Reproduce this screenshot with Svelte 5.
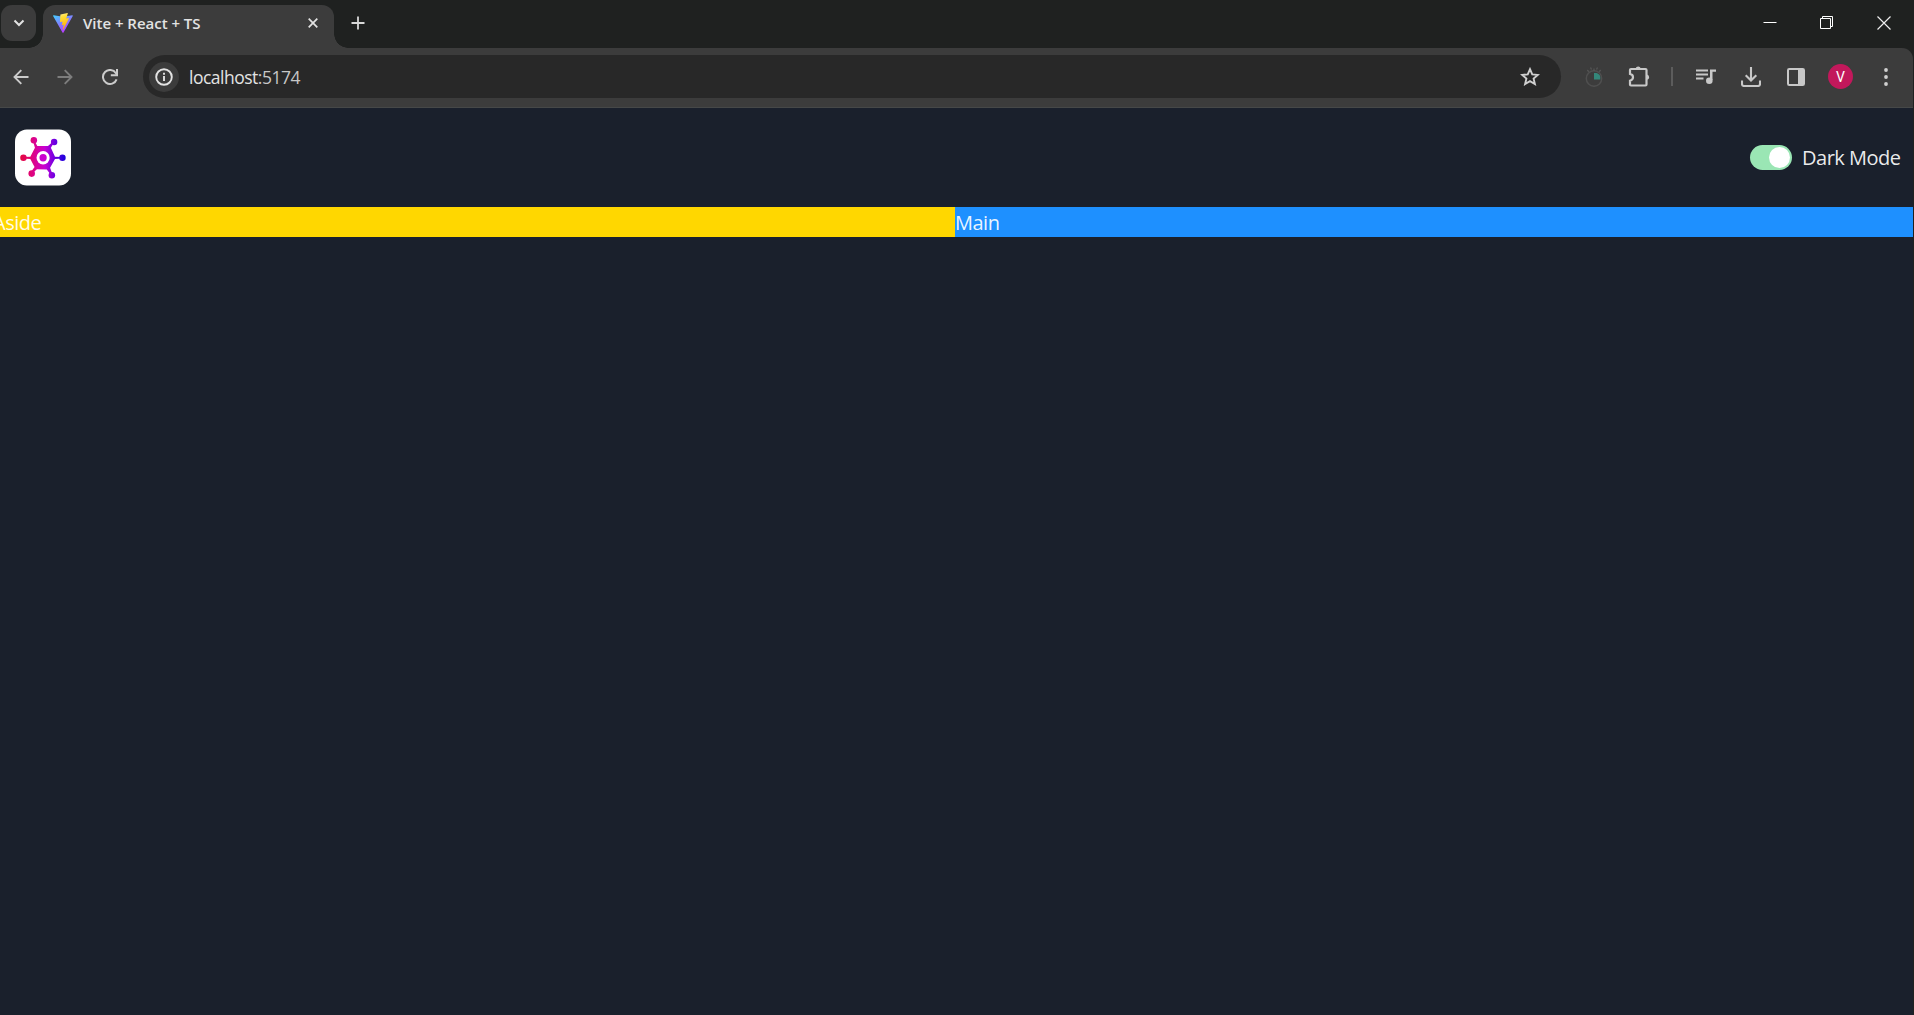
<script lang="ts">
  let dark = $state(true);
</script>

<div class="window">
  <div class="tabstrip">
    <button class="tab-search" aria-label="Search tabs">
      <svg width="12" height="8" viewBox="0 0 12 8"><path d="M1.500 1.500 6 6l4.500-4.500" fill="none" stroke="#e3e3e3" stroke-width="2" /></svg>
    </button>
    <div class="tab">
      <svg class="favicon" width="20" height="20" viewBox="0 0 20 20">
        <defs>
          <linearGradient id="vite" x1="0" y1="0" x2="0.6" y2="1"><stop offset="0" stop-color="#41d1ff" /><stop offset="1" stop-color="#bd34fe" /></linearGradient>
          <linearGradient id="bolt" x1="0.4" y1="0" x2="0.6" y2="1"><stop offset="0" stop-color="#ffea83" /><stop offset="0.2" stop-color="#ffdd35" /><stop offset="1" stop-color="#ffa800" /></linearGradient>
        </defs>
        <path d="M19.800 3 10.500 19.500a.6.6 0 0 1-1 0L.1 3a.6.6 0 0 1 .6-.8L10 3.800l9.200-1.600a.6.6 0 0 1 .6.8z" fill="url(#vite)" />
        <path d="M14.500.1 7.600 1.400a.3.3 0 0 0-.2.200L7 8.800c0 .2.1.300.3.300l1.900-.4c.2 0 .4.100.3.300L8.900 11.800c0 .2.1.400.3.300l1.200-.4c.2 0 .4.100.3.300l-.9 4.400c-.1.300.3.400.5.200l5.600-11.100c.1-.2-.1-.4-.3-.4l-2 .4c-.2 0-.3-.1-.3-.3l1.500-4.800c0-.2-.1-.4-.3-.3z" fill="url(#bolt)" />
      </svg>
      <span class="title">Vite + React + TS</span>
      <svg class="tab-close" width="10" height="10" viewBox="0 0 10 10"><path d="m.7.700 8.600 8.600M9.300.700.7 9.300" stroke="#e3e3e3" stroke-width="1.700" /></svg>
    </div>
    <svg class="new-tab" width="14" height="14" viewBox="0 0 14 14"><path d="M7 .5v13M.5 7h13" stroke="#d8d8d8" stroke-width="1.800" /></svg>
    <div class="controls">
      <span><svg width="14" height="14" viewBox="0 0 14 14"><path d="M.5 6.500h13" stroke="#fff" /></svg></span>
      <span><svg width="14" height="14" viewBox="0 0 14 14"><path d="M.5 2.500h10v10H.5zM2.500 2V.5h10v10H11" fill="none" stroke="#fff" /></svg></span>
      <span><svg width="14" height="14" viewBox="0 0 14 14"><path d="m.5.500 13 13M13.500.5l-13 13" stroke="#eee" stroke-width="1.200" /></svg></span>
    </div>
  </div>

  <div class="toolbar">
    <div class="nav">
      <span><svg width="16" height="16" viewBox="0 0 16 16"><path d="M15.500 8H2M8.300 1.200 1.500 8l6.800 6.800" fill="none" stroke="#cbcbcb" stroke-width="1.900" /></svg></span>
      <span><svg width="16" height="16" viewBox="0 0 16 16"><path d="M.5 8H14M7.700 1.200 14.500 8l-6.800 6.800" fill="none" stroke="#7d7d7d" stroke-width="1.900" /></svg></span>
      <span><svg width="16" height="16" viewBox="0 0 16 16"><path d="M14.600 10.300A7 7 0 1 1 13.900 4.200L15 5.800" fill="none" stroke="#cbcbcb" stroke-width="2" /><path d="M15 0v6.300H8.800" fill="none" stroke="#cbcbcb" stroke-width="2" /></svg></span>
    </div>
    <div class="omnibox">
      <span class="info">
        <svg width="18" height="18" viewBox="0 0 18 18"><circle cx="9" cy="9" r="7.800" fill="none" stroke="#e3e3e3" stroke-width="1.900" /><path d="M9 8v5M9 4.800v1.900" stroke="#e3e3e3" stroke-width="1.900" /></svg>
      </span>
      <span class="url">localhost<i>:5174</i></span>
      <svg class="star" width="20" height="20" viewBox="0 0 20 20"><path d="m10 2.200 2.250 5.200 5.600.500-4.250 3.700 1.300 5.500L10 14.200l-4.900 2.900 1.300-5.500L2.150 7.900l5.600-.5z" fill="none" stroke="#d0d0d0" stroke-width="1.900" /></svg>
    </div>
    <div class="actions">
      <span><svg width="18" height="22" viewBox="0 0 18 22"><circle cx="9" cy="12.500" r="7.700" fill="none" stroke="#4f4f4f" stroke-width="1.500" /><path d="M9 2.500V5M5.500 1.500l1 2M12.500 1.500l-1 2M2.300 4l1.500 1.700M15.700 4l-1.500 1.700" stroke="#555" stroke-width="1.300" /><path d="M9 7h2.500Q15.200 8.500 15.300 11v2.500H9z" fill="#34877a" /></svg></span>
      <span><svg width="22" height="22" viewBox="0 0 22 22"><path d="M3 3h14.500a1 1 0 0 1 1 1v14.500a1 1 0 0 1-1 1H3a1 1 0 0 1-1-1v-3.800c2-.5 3-1.700 3-3.400S4 8.400 2 7.900V4a1 1 0 0 1 1-1z" fill="none" stroke="#c8c8c8" stroke-width="2.200" /><path d="M7.600 2.500a2.700 2.700 0 0 1 5.200 0zM19 8.500a2.700 2.700 0 0 1 0 5.300z" fill="#c8c8c8" /></svg></span>
      <span class="divider"></span>
      <span><svg width="20" height="20" viewBox="0 0 20 20"><path d="M0 3.500h12M0 7.500h12M0 11.500h7.500" stroke="#c8c8c8" stroke-width="1.900" /><path d="M14 2.500h6v2.200h-3.500V13H14z" fill="#c8c8c8" /><circle cx="13.300" cy="13.700" r="3.300" fill="#c8c8c8" /></svg></span>
      <span><svg width="20" height="20" viewBox="0 0 20 20"><path d="M10 0v13M4.700 8.200 10 13.500l5.300-5.300M1 13.500V17a2 2 0 0 0 2 2h14a2 2 0 0 0 2-2v-3.500" fill="none" stroke="#c8c8c8" stroke-width="2.100" /></svg></span>
      <span><svg width="18" height="18" viewBox="0 0 18 18"><rect x="1" y="1" width="16" height="16" rx="1.300" fill="none" stroke="#c8c8c8" stroke-width="2" /><path d="M11 1h6v16h-6z" fill="#c8c8c8" /></svg></span>
      <span><b class="avatar">V</b></span>
      <span><svg width="4" height="18" viewBox="0 0 4 18"><circle cx="2" cy="2" r="1.900" fill="#d0d0d0" /><circle cx="2" cy="9" r="1.900" fill="#d0d0d0" /><circle cx="2" cy="16" r="1.900" fill="#d0d0d0" /></svg></span>
    </div>
  </div>

  <div class="page">
    <header>
      <svg width="56" height="57" viewBox="0 0 57 57" preserveAspectRatio="none">
        <defs><linearGradient id="hub" gradientUnits="userSpaceOnUse" x1="5" y1="0" x2="51" y2="0"><stop offset="0" stop-color="#e3073d" /><stop offset=".25" stop-color="#e00479" /><stop offset=".55" stop-color="#c800d2" /><stop offset=".75" stop-color="#7400e0" /><stop offset="1" stop-color="#1b00dc" /></linearGradient></defs>
        <rect x="0" y=".5" width="57" height="56" rx="12" fill="#fff" />
        <g fill="url(#hub)">
          <circle cx="19.200" cy="11.300" r="3.300" /><circle cx="39.800" cy="13" r="3.300" /><circle cx="8.600" cy="28.800" r="3.300" /><circle cx="48.300" cy="28.800" r="3.300" /><circle cx="17" cy="44.600" r="3.300" /><circle cx="37.500" cy="46.200" r="3.300" />
          <path d="m18.700 13.500 1.700-.7L22.700 17h10.900l4.200-3.700 1.500 1-2.800 4.500 4.200 8.900 7.300.4v1.400l-7.300.4-5 8.800 2.500 6.500-1.700.7-4.100-5.300-10.100-.3-4.500 4-1.500-1.200 3.600-5-4.300-8.200-8.400-.4v-1.400l8.400-.4 4.700-8.900z" />
        </g>
        <circle cx="28.600" cy="28.700" r="6.700" fill="#fff" /><circle cx="28.600" cy="28.700" r="3.700" fill="#cb00cf" />
      </svg>
      <label>
        <input type="checkbox" bind:checked={dark} />
        <span class="track"></span>
        <span class="label">Dark Mode</span>
      </label>
    </header>
    <div class="columns">
      <aside><span>Aside</span></aside>
      <main><span>Main</span></main>
    </div>
  </div>
</div>

<style>
  :global(body) { background: #000; overflow: hidden; }
  * { box-sizing: border-box; }
  svg { display: block; flex: none; }
  .window { height: 1015px; display: flex; flex-direction: column; background: #1f2120; font-family: "Open Sans", "Noto Sans", sans-serif; }
  .tabstrip { height: 48px; display: flex; align-items: flex-start; padding: 5px 2px 0 1px; }
  .tab-search { width: 35px; height: 36px; border: 0; padding: 0; border-radius: 11px; background: #3c3c3c; display: grid; place-items: center; }
  .tab { position: relative; width: 291px; height: 43px; margin-left: 7px; padding: 0 16px 7px 10px; display: flex; align-items: center; background: #3c3c3c; border-radius: 12px 12px 0 0; }
  .tab::before, .tab::after { content: ""; position: absolute; bottom: 0; width: 14px; height: 14px; }
  .tab::before { left: -14px; background: radial-gradient(circle at 0 0, transparent 13.5px, #3c3c3c 14px); }
  .tab::after { right: -14px; background: radial-gradient(circle at 100% 0, transparent 13.5px, #3c3c3c 14px); }
  .title { margin-left: 10px; color: #e3e3e3; font-size: 15px; font-weight: 600; letter-spacing: -0.02px; line-height: 20px; white-space: nowrap; }
  .tab-close { margin-left: auto; }
  .new-tab { margin: 11px 0 0 17px; }
  .controls { display: flex; margin-left: auto; }
  .controls span { width: 57px; height: 35px; display: grid; place-items: center; }
  .toolbar { height: 60px; display: flex; align-items: center; background: #3c3c3c; border-top-right-radius: 11px; border-bottom: 1px solid #464848; padding: 0 4px 2px 0; margin-right: 1px; }
  .nav, .actions { display: flex; align-items: center; flex: none; }
  .nav { width: 143px; }
  .nav span { width: 45px; display: grid; place-items: center; }
  .nav span:first-child { width: 42px; }
  .omnibox { width: 1418px; height: 43px; padding: 0 21px 0 6px; border-radius: 22px; background: #282828; display: flex; align-items: center; flex: none; }
  .info { width: 30px; height: 30px; border-radius: 50%; background: #3c3c3c; display: grid; place-items: center; }
  .url { margin-left: 10px; padding-top: 1px; color: #e3e3e3; font-size: 17.5px; line-height: 24px; letter-spacing: -0.5px; }
  .url i { font-style: normal; color: #c7c7c7; }
  .star { margin-left: auto; }
  .actions { margin-left: 10px; }
  .actions > span { width: 45px; display: grid; place-items: center; flex: none; }
  .actions > .divider { width: 2px; height: 19px; margin: 0 10px; background: #5c5c5c; }
  .avatar { width: 25px; height: 25px; border-radius: 50%; background: #c2185b; color: #fff; font: 400 14px/26px Roboto, sans-serif; text-align: center; }
  .page { flex: 1; margin-right: 1px; background: #1a202c; color: rgba(255, 255, 255, 0.92); }
  header { height: 99px; padding: 0 12px 0 15px; display: flex; align-items: center; justify-content: space-between; }
  label { display: flex; align-items: center; }
  input { appearance: none; width: 0; height: 0; margin: 0; }
  .track { width: 42px; height: 25px; padding: 2px; border-radius: 13px; background: #cbd5e0; display: flex; }
  .track::after { content: ""; width: 21px; height: 21px; border-radius: 50%; background: #fff; }
  input:checked + .track { background: #9ae6b4; justify-content: flex-end; }
  .label { width: 99px; margin-left: 10px; font-size: 20px; letter-spacing: -0.5px; line-height: 30px; white-space: nowrap; }
  .columns { display: grid; grid-template-columns: 955px 1fr; font-size: 20px; letter-spacing: -0.5px; line-height: 30px; }
  .columns span { display: block; padding-top: 1px; height: 30px; }
  aside { background: gold; }
  aside span { margin-left: -7px; }
  main { background: dodgerblue; }
</style>
